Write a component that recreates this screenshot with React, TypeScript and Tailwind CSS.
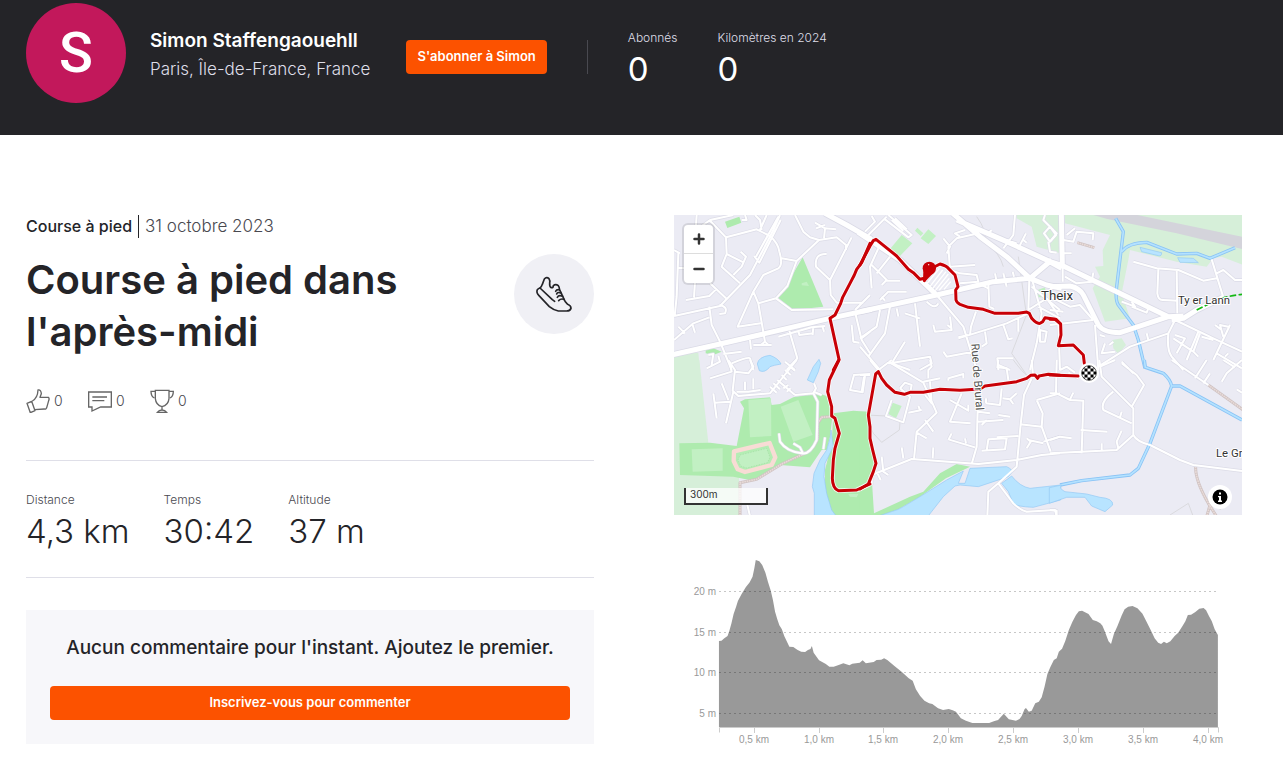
import React from "react";

type Tile = {
  x: number;
  y: number;
  meadow?: string;
  green?: string;
  pale?: string;
  water?: string;
  stream?: string;
  trail?: string;
  minor: string;
  major?: string;
  route: string;
};

const tiles: Tile[] = [
  {
    x: -12,
    y: -15,
    meadow: "M12 430L85 428L90 482H12Z",
    green:
      "M398 142L460 290L370 300L322 262L352 232L370 190ZM165 35L208 20L214 38L172 54ZM107 418L130 415L155 425L130 435L107 430Z",
    pale: "M395 220L410 215L417 228L395 226Z",
    water: "M262 462Q265 440 300 436Q325 445 333 462Q310 466 300 470Q285 490 268 482ZM412 510L430 470L447 448L452 460L445 485L430 518Z",
    minor:
      "M12 318L150 288L240 195L310 60L330 15M258 140L325 20M252 138L268 158L332 30M80 15L78 45M118 30L168 82L260 58L300 78Q325 100 328 125Q340 165 325 175L280 195L250 245L203 350L272 340M168 82L170 132L155 170L210 220M170 132L222 158M190 195L215 170L228 140L212 125M120 30L190 15M255 15L270 30L275 60M290 15L270 60M335 145L380 153M447 90L380 153L352 228L318 265L265 280M318 265L365 300L490 298M250 245L265 280L285 395M375 15L400 65L420 82L447 90L500 82L528 105L528 120M545 82L480 210L438 170Q432 130 470 132M480 210L482 255L500 278H580M435 38L465 55L498 58M438 55L465 45M465 55L462 85M118 290L125 345L150 395L185 480M12 390L70 340L118 322M25 350L45 370M68 345L75 368M120 220L168 265M138 238L118 258L48 270M75 215L72 262M148 285Q175 290 165 310L148 312M12 120L30 130M25 130L20 260L14 318M45 85L120 30M25 173L45 175M215 30L230 30L225 15M160 432L215 425M185 460Q235 440 240 445L250 480M115 435L130 432L125 465M240 390L243 418M250 405H305M272 405L285 395L295 405M325 380L425 352L465 348M385 362L388 375L430 370M430 350L428 375M458 350L462 365M358 362L382 445L350 480M345 455L375 480M555 305L575 390L600 430M555 300L600 255M575 385L600 365M545 345L550 395L568 398",
    major: "M0 436L150 402L310 365L480 325L605 298M465 10L530 45L605 88",
    route: "M490 480L507 448L480 325L495 315L512 280L518 262L540 220L553 195L560 178L575 158L600 100",
  },
  {
    x: 558,
    y: -15,
    meadow: "M470 15H602V130L530 110L515 50L470 25ZM533 100H600V122Z",
    green: "",
    pale: "M125 75L157 100L118 140L92 115ZM205 58L228 78L205 102L182 85ZM172 53L190 70L182 78L165 62ZM533 240L555 232L560 262L535 262Z",
    minor:
      "M85 15L155 75L145 82L75 28M95 30L130 62M105 25L140 58M80 20L25 75M15 65L45 35L35 18M55 115L30 170L35 235M35 165L80 210L65 225M90 140L50 190M75 212L120 212M60 270L85 245L140 245M65 260L75 272M355 70L290 85L265 110L270 180L300 190L350 195L355 215L300 220M250 85L270 110L260 130M270 170L345 165M315 60L285 70L300 80M465 15L460 75L430 115M498 70L475 115M490 90L500 98M440 90L470 100M385 220L388 290L402 297M355 220L385 235M430 190L440 230M405 190L410 215M458 185L462 200M200 275Q225 300 235 280M230 255L310 350L350 480M508 205L505 300L560 265M515 205L545 310L530 400L510 480M515 230L600 300M560 265L595 315M535 290L600 325M295 385L440 340L505 310M295 382L325 375M348 305L333 350L330 375M375 365L380 400L365 410M430 345L445 388L458 385M475 325V365M270 320L275 360L225 365L220 345M262 345L275 355M250 425L260 440L340 425M110 295L115 320M165 280L180 410M135 310L180 325M60 300L50 350L0 385M90 290L75 370L25 440M0 410L60 480M135 395L95 460L150 480M90 460L210 440L215 460L180 480M415 480L412 445L460 445M415 465L450 480M540 360L560 365L555 395L540 395ZM552 70L570 50L590 70L570 95ZM555 15L550 30L580 60M565 95L570 125L590 128M395 60L380 75",
    major: "M-5 67L120 150L230 255M0 305L230 255L400 215L510 205L575 150M278 10L360 80L440 140L510 205L560 225L605 235M290 30L440 95L560 150L605 175",
    route:
      "M0 165L30 108L40 92L48 88L110 138L145 178L160 188L180 208L193 205M193 212L205 180L240 162Q260 168 265 175L285 195L294 230L287 240L288 270Q290 278 300 283L325 292L370 298L405 310H475L500 306L508 310L515 325Q530 342 540 340L548 335L555 323L585 328L600 340",
  },
  {
    x: 1128,
    y: -15,
    meadow:
      "M0 15H18V60L0 80ZM45 15H580V165L515 140L490 145L470 170L380 155L240 120L235 150L215 250L240 325L165 335L128 235L150 200L135 170L160 168L158 120L180 75L45 40ZM187 390L215 385L228 405L205 432L190 415Z",
    water: "M270 112L335 128Q335 140 325 137L275 125ZM383 143L430 145L445 158L390 157Z",
    stream: "M197 25L220 65L200 230Q195 270 205 285L250 345L265 390L285 475M215 125Q235 98 290 97L380 132L440 130L480 145L555 113",
    trail: "M82 98L133 113",
    minor:
      "M250 155L320 175L385 180L460 212L500 205M325 178L322 250Q325 272 340 270L382 272M380 180L382 310M485 148L520 262M500 190L520 180L555 210H576M0 260L60 290L90 285L130 330M135 345L145 480M0 345L130 330M25 340L30 480M145 470L240 410L355 370L375 330M375 330L490 385L576 425M355 370Q350 420 365 440L400 480M370 385L430 425M375 375L405 385L380 430M445 365L410 450M450 370L430 425L445 440M455 380L490 390M495 345L515 360M540 345L490 450M535 350L510 345L520 380M500 430L576 475M525 440L535 430M290 370L295 390M165 400L155 430L195 425M178 405L190 395M38 165V215M130 188L125 215L80 220L45 200M40 90L70 95L80 65L130 70L128 90M50 75L75 55M38 130H65M215 275L255 290L245 275M245 290L290 308L295 295M215 455L235 475M150 375L165 380M0 300L40 305M0 50L18 75L0 95",
    major: "M0 155L40 168L200 245L355 320L400 318M34 10L37 165M0 230L60 228Q90 235 100 255L145 345Q160 368 210 368L355 320M365 330L400 325L440 300L520 262",
    route: "M0 328H18L32 342L33 375L25 407L70 405L100 435L103 460",
  },
  {
    x: -12,
    y: 435,
    meadow: "M12 0H88L115 248L200 262L207 350L210 470H12Z",
    green:
      "M210 125L225 118L300 112L305 135L330 132L370 112L440 98L470 108L487 170L480 230L470 270H455L420 322L330 315L250 362L190 350L30 345L28 250L120 248L200 258L222 145ZM490 160L550 152L602 156V470H485L465 400V330L485 250Z",
    pale: "M235 120L303 115L304 228L240 232ZM332 140L385 120L428 225L370 245ZM65 268L158 265V332L68 335ZM535 402L565 402L560 412L540 410Z",
    water: "M483 210L490 260L465 310L462 350L470 400L485 450L500 470H433V400L427 380L432 340L450 300L470 270L480 235Z",
    trail: "M480 170L455 172L443 190V235Q435 260 415 275L335 312L260 358L210 368V470",
    minor:
      "M175 0L195 30L188 92L205 108L300 100L380 0M190 95L168 190M130 100L140 175M135 128L180 125M155 70L175 120M200 95L235 95L272 90M225 65V90M250 55V88M120 55L185 35L180 10M110 25L150 5L145 -12M195 35L235 40L250 20L240 0M300 80L320 98M310 70L330 88M322 60L375 105M335 45L350 60M345 30L362 45M357 18L375 32M340 85L355 75M350 95L362 85M375 105L430 100L443 125L440 240Q420 285 395 280Q350 275 330 245L327 220M398 278L390 262L370 250M430 100L438 85L432 70M455 105L430 95M465 232L460 268M550 45L600 42M552 45L540 90L578 97L585 48M232 435L240 468",
    route: "M600 372L560 390L505 392Q488 385 487 355L490 300L495 265L508 220L495 175L485 168V140L473 95L478 60L507 0",
  },
  {
    x: 558,
    y: 435,
    green: "M-2 155L18 155L30 250L48 320L35 350L42 460L150 410L190 395L240 340L290 312L330 320L258 355L180 410L115 448L55 470H-2Z",
    pale: "M98 128L125 138L108 175L85 162Z",
    water:
      "M50 470L115 448L130 440L180 410L260 360L310 333L295 370L315 370L330 325L440 320Q458 328 455 337L445 350L355 380L300 375L285 378L250 410L203 470ZM455 348Q480 380 510 385L602 375V420L520 442Q470 440 460 430L445 395L425 370Z",
    minor:
      "M30 0L55 30L95 0M0 45L30 45M5 95L12 50M85 5L190 68L230 158L170 215L162 297M190 65L240 55M210 0L215 20L205 30V55M35 375V345L155 297L355 312L470 300L545 285L600 280M65 290L70 335L85 345M50 335L62 360M335 312L350 260L353 150M95 120L78 168L130 187L150 110L120 85M120 85L135 68L155 75L150 100M145 158L185 150M175 138L180 150M195 180L220 215M195 105L215 130L210 65M170 218L200 235M125 262L130 295M220 262L218 295M305 100L270 185L332 190M270 120L325 152V135M355 185L430 180M355 155L390 160M380 180L365 195M265 240L275 220M265 238L345 262M315 235L318 250M365 272L435 268L440 235L385 238L380 272M410 232L475 228M378 130L420 135L425 85M378 130V115M428 115L450 118L460 132M450 118L470 100M515 55L492 105L482 193L470 320L415 370L385 395L382 470M415 370L460 430Q480 450 500 455L585 450L590 470M530 120L600 100M530 120L548 160L545 200L480 193M545 200L572 275M505 240L550 250M500 265L512 245L500 235M550 245L600 230M265 55L310 42V55M265 55V62M415 0L412 22L440 25L445 60M515 0L520 55M415 165L450 170",
    route:
      "M600 46L565 43L537 48L533 55L525 45L512 46L500 55L470 65L375 78L360 87L300 91L240 88L190 97L150 97L133 103L105 97L80 75L65 55L55 35L47 42L25 165L30 200V235L38 270L48 310L40 335L25 372L0 387",
  },
  {
    x: 1128,
    y: 435,
    meadow: "",
    water: "M-2 383L35 375Q25 385 45 395L110 402L150 412Q190 415 188 435L165 455L125 438L105 412L50 412L-2 430Z",
    stream: "M283 0L286 22L340 40Q362 60 365 78L300 250L265 325L240 345L95 362L30 375M365 78H390L576 180",
    trail: "M475 75L580 150M437 320Q435 360 475 430L500 470M480 435L470 470",
    minor:
      "M0 100L20 100L60 120L100 122L95 280M0 280L200 270L250 225V145L155 50L148 0M190 95Q150 125 160 150L245 190M245 140L282 75L260 45L215 10M235 25L250 40M92 210L172 215M250 225Q260 245 300 255L390 300L430 315L576 333M205 265L200 245L215 212M155 250V270M60 118L70 98M20 0L18 100M0 240L30 230L65 235M210 172L215 155M30 30L50 20L75 38M55 38L85 55M150 20L195 0M365 0L475 75M435 55L470 0M460 70L480 40M515 65L530 40L576 0M555 22L520 0M560 88L576 98M0 450L20 452V465",
    route: "M85 48L0 45",
  },
];

function Layer({ field, children }: { field: keyof Tile; children: (d: string) => React.ReactNode }) {
  return (
    <>
      {tiles.map((t, i) => (
        <g key={i} transform={`translate(${t.x} ${t.y})`}>
          {t[field] ? children(String(t[field])) : null}
        </g>
      ))}
    </>
  );
}

function MapDrawing() {
  return (
    <svg
      viewBox="0 0 1704 900"
      className="block w-full"
      fill="none"
      strokeLinejoin="round"
      role="img"
      aria-label="Carte du parcours"
    >
      <rect width="1704" height="900" fill="#ebebf4" />
      <Layer field="meadow">{(d) => <path d={d} fill="#d6efd9" />}</Layer>
      <path d="M1258 0H1390L1704 65V102L1508 55L1300 12Z" fill="#d4d4db" />
      <Layer field="green">{(d) => <path d={d} fill="#aeebae" />}</Layer>
      <Layer field="pale">{(d) => <path d={d} fill="#c2f0c3" />}</Layer>
      <g transform="translate(-12 435)">
        <path d="M192 274L299 249L316 292L305 315L225 336L203 328L191 303Z" fill="#b4edb4" stroke="#f8dcd5" strokeWidth="13" />
        <path d="M210 285L290 265L300 292L292 308L230 324L212 318L204 300Z" fill="#c2f0c3" stroke="#a0dca2" strokeWidth="2" strokeDasharray="4 4" />
      </g>
      <g transform="translate(558 435)" stroke="#dadade" strokeWidth="3">
        <path d="M18 165L80 168M120 187L118 210L65 247L40 220L30 200M460 0Q490 40 500 45M350 10" />
        <path d="M350 -430Q380 -390 378 -350Q420 -320 430 -280M475 -310L500 -130M505 -150L455 -20L500 45M1080 450L1100 400" />
        <path d="M930 465L985 430L998 465" />
      </g>
      <Layer field="trail">
        {(d) => (
          <>
            <path d={d} stroke="#cfc2c2" strokeWidth="9" />
            <path d={d} stroke="#e8dbd8" strokeWidth="5" strokeDasharray="5 2" />
          </>
        )}
      </Layer>
      <Layer field="minor">{(d) => <path d={d} stroke="#dcdce7" strokeWidth="10" />}</Layer>
      <Layer field="major">{(d) => <path d={d} stroke="#dadae6" strokeWidth="20" />}</Layer>
      <Layer field="stream">
        {(d) => (
          <>
            <path d={d} stroke="#8ac3f5" strokeWidth="10" />
            <path d={d} stroke="#b4e2ff" strokeWidth="5" />
          </>
        )}
      </Layer>
      <Layer field="water">{(d) => <path d={d} fill="#b8e4ff" stroke="#94c8f4" strokeWidth="2" />}</Layer>
      <Layer field="minor">{(d) => <path d={d} stroke="#fff" strokeWidth="6" />}</Layer>
      <Layer field="major">{(d) => <path d={d} stroke="#fff" strokeWidth="15" />}</Layer>
      <g transform="translate(558 -15)" stroke="#fff" strokeWidth="4">
        <path d="M200 222L238 175M208 232L248 180M216 238L258 185M226 242L265 192M238 240L268 205M252 238L272 215" />
      </g>
      <path d="M1568 285L1625 256Q1660 243 1704 238" stroke="#14b814" strokeWidth="5" strokeDasharray="20 7" />
      <Layer field="route">{(d) => <path d={d} stroke="#fff" strokeOpacity=".8" strokeWidth="14" strokeLinecap="round" />}</Layer>
      <Layer field="route">{(d) => <path d={d} stroke="#c80006" strokeWidth="9" strokeLinecap="round" />}</Layer>
      <g fill="#c80006">
        <circle cx="766" cy="160" r="20" />
        <path d="M748 168L747 198H755L780 172Z" />
        <circle cx="764" cy="149" r="2" fill="#fff" />
      </g>
      <circle cx="1245" cy="474" r="30" fill="#fff" />
      <circle cx="1245" cy="474" r="22" stroke="#000" strokeWidth="2" />
      <clipPath id="finish">
        <circle cx="1245" cy="474" r="22" />
      </clipPath>
      <g clipPath="url(#finish)" stroke="#000" strokeWidth="9" strokeDasharray="9 9">
        <path d="M1222.500 456H1268M1231.500 465H1268M1222.500 474H1268M1231.500 483H1268M1222.500 492H1268" />
      </g>
      <g
        fill="#333"
        stroke="#fff"
        strokeWidth="6"
        paintOrder="stroke"
        className="font-[Roboto,sans-serif]"
      >
        <text x="1101" y="256" fontSize="40">Theix</text>
        <text x="1512" y="267" fontSize="34">Ty er Lann</text>
        <text x="1626" y="726" fontSize="34">Le Gra</text>
        <text transform="translate(892 386) rotate(86)" fontSize="34" fill="#555">Rue de Brural</text>
      </g>
    </svg>
  );
}

function ActivityMap() {
  return (
    <div className="relative overflow-hidden font-[Inter,sans-serif]">
      <MapDrawing />
      <div className="absolute top-[10px] left-[10px] flex w-[29px] flex-col rounded bg-white shadow-[0_0_0_2px_rgba(0,0,0,0.1)]">
        <button aria-label="Zoomer" className="flex h-[29px] items-center justify-center border-b border-[#ddd]">
          <svg className="size-3" viewBox="0 0 12 12" stroke="#333" strokeWidth="2.500" strokeLinecap="round">
            <path d="M1.500 6h9M6 1.500v9" />
          </svg>
        </button>
        <button aria-label="Dézoomer" className="flex h-[29px] items-center justify-center">
          <svg className="size-3" viewBox="0 0 12 12" stroke="#333" strokeWidth="2.500" strokeLinecap="round">
            <path d="M1.500 6h9" />
          </svg>
        </button>
      </div>
      <div className="absolute bottom-[10px] left-[10px] h-[17px] w-[84px] border-2 border-t-0 border-[#333] bg-white/75 px-1 text-[10px] leading-[13px] text-[#333]">
        300m
      </div>
      <button
        aria-label="Informations sur la carte"
        className="absolute right-[10px] bottom-[6px] flex size-6 items-center justify-center rounded-full bg-white"
      >
        <svg className="size-4" viewBox="0 0 16 16">
          <circle cx="8" cy="8" r="7.500" />
          <path d="M6 7h3v4.500h1V13H6v-1.500h1V8.200H6zM7 3.500h2v2H7z" fill="#fff" />
        </svg>
      </button>
    </div>
  );
}

const elevationTicks = [
  { label: "20 m", y: 51 },
  { label: "15 m", y: 92 },
  { label: "10 m", y: 132 },
  { label: "5 m", y: 173 },
];

const distanceTicks = [
  { label: "0,5 km", x: 80 },
  { label: "1,0 km", x: 145 },
  { label: "1,5 km", x: 209 },
  { label: "2,0 km", x: 274 },
  { label: "2,5 km", x: 339 },
  { label: "3,0 km", x: 404 },
  { label: "3,5 km", x: 469 },
  { label: "4,0 km", x: 534 },
];

function ElevationChart() {
  return (
    <svg
      viewBox="0 0 568 210"
      className="block w-full font-[Liberation_Sans,Arial,sans-serif]"
      role="img"
      aria-label="Profil d'altitude"
    >
      <path
        transform="translate(6 0) scale(.3574 .33333)"
        fill="#999"
        d="M109 303L116 302L124 295L133 288L138 273L144 250L150 222L157 200L162 183L172 163L184 142L195 127L203 110L208 85L212 60L222 64L230 75L239 98L246 125L254 152L260 180L266 215L272 237L278 256L285 268L292 289L306 320L317 321L328 329L339 335L350 336L358 330L365 327L369 318L374 338L389 361L408 372L418 380L430 380L444 375L457 370L474 376L482 371L503 368L511 361L520 370L542 366L550 360L563 359L571 355L580 360L600 378L620 395L640 415L651 422L660 448L672 468L684 482L697 490L706 492L722 505L736 510L752 507L763 511L772 515L786 535L800 542L818 549H865L880 543L890 540L906 521L920 538L940 542L950 537L956 528L964 508L968 504L976 515L984 512L994 490L1004 485L1012 472L1020 440L1028 402L1036 382L1046 360L1054 355L1060 335L1069 326L1078 303L1088 270L1098 245L1108 225L1116 214L1125 212L1143 222L1155 240L1166 244L1176 250L1182 257L1189 275L1199 304L1206 312L1214 282L1224 258L1236 226L1244 208L1254 200L1266 198L1280 205L1294 221L1304 242L1317 270L1328 295L1338 308L1346 312L1354 305L1362 310L1372 304L1384 288L1394 278L1406 258L1414 244L1421 225L1430 224L1442 216L1453 206L1465 204L1472 211L1480 228L1488 244L1496 268L1505 285V561H109Z"
      />
      <g stroke="#000" strokeOpacity=".22" strokeDasharray="2 3">
        {elevationTicks.map((t) => (
          <path key={t.label} d={`M45 ${t.y}.500H544`} />
        ))}
      </g>
      <g fill="#999" fontSize="10" textAnchor="end">
        {elevationTicks.map((t) => (
          <text key={t.label} x="42" y={t.y + 4}>
            {t.label}
          </text>
        ))}
      </g>
      <path d="M45.500 192.500V187.500H544.500V192.500" fill="none" stroke="#ccc" />
      <g stroke="#ccc">
        {distanceTicks.map((t) => (
          <path key={t.label} d={`M${t.x}.500 187V193`} />
        ))}
      </g>
      <g fill="#999" fontSize="10" textAnchor="middle">
        {distanceTicks.map((t) => (
          <text key={t.label} x={t.x} y="203">
            {t.label}
          </text>
        ))}
      </g>
    </svg>
  );
}

function Stat({ label, value, dark = false }: { label: string; value: string; dark?: boolean }) {
  return (
    <div className="flex flex-col">
      <dt className={dark ? "text-[12px] leading-4 font-light text-[#dfdfe8]" : "text-[12px] leading-4 font-light text-[#494950]"}>{label}</dt>
      <dd className={dark ? "text-[33px] leading-[46px] text-white" : "text-[33px] leading-[46px] font-light text-[#242428]"}>{value}</dd>
    </div>
  );
}

const iconClass = "size-6 fill-none stroke-[#666] stroke-[4]";

function Reaction({ label, children }: { label: string; children: React.ReactNode }) {
  return (
    <li className="flex items-center gap-1" aria-label={label}>
      {children}
      <span className="w-2 text-sm font-light text-[#494950]">0</span>
    </li>
  );
}

export default function App() {
  return (
    <div className="min-h-screen bg-white font-[Inter,sans-serif] text-[#242428]">
      <header className="flex items-start gap-9 bg-[#242428] pt-[3px] pr-[41px] pb-8 pl-[26px]">
        <div className="flex items-center gap-6">
          <div className="flex size-[100px] items-center justify-center rounded-full bg-[#c2185b] font-[Roboto,sans-serif] text-[56px] font-medium text-white">
            S
          </div>
          <div className="pt-1">
            <h2 className="text-[19px] leading-7 font-semibold text-white">Simon Staffengaouehll</h2>
            <p className="text-[17px] leading-7 font-light text-[#dfdfe8]">Paris, Île-de-France, France</p>
          </div>
        </div>
        <div className="flex items-center gap-10 pt-[19px]">
          <button className="h-[34px] rounded bg-[#fc5200] px-[11px] text-[13px] font-semibold text-white">S'abonner à Simon</button>
          <div className="h-[34px] w-px bg-[#494950]" />
          <dl className="flex gap-10 pt-2">
            <Stat dark label="Abonnés" value="0" />
            <Stat dark label="Kilomètres en 2024" value="0" />
          </dl>
        </div>
      </header>

      <main className="grid grid-cols-2 gap-20 pt-20 pr-[41px] pb-6 pl-[26px]">
        <section>
          <div className="flex h-[23px] items-center leading-[23px]">
            <span className="border-r border-[#242428] pr-[6px] text-base leading-[23px] font-medium">Course à pied</span>
            <time className="pl-[6px] text-[17px] font-light text-[#494950]">31 octobre 2023</time>
          </div>
          <div className="mt-4 flex items-start justify-between">
            <h1 className="w-[420px] text-[40px] leading-[52px] font-semibold">Course à pied dans l'après-midi</h1>
            <div className="flex size-20 shrink-0 items-center justify-center rounded-full bg-[#f0f0f5]">
              <svg
                className="size-10"
                viewBox="132 105 120 120"
                fill="none"
                stroke="#242428"
                strokeWidth="5"
                strokeLinecap="round"
                strokeLinejoin="round"
              >
                <path d="M163 120Q170 112 177 119Q181 125 179 132Q178 143 184 146Q190 146 190 140Q197 134 205 140Q209 145 209 153Q213 160 219 174Q224 188 233 196Q243 200 243 208Q240 216 230 216H205Q190 213 178 203L147 170Q138 161 142 152Q145 148 150 147Q154 145 157 136Z" />
                <path d="M150 147L187 182L194 187M197 157Q199 151 208 152M200 165Q202 158 212 162M202 175Q206 167 218 172M206 185Q212 178 222 181" />
              </svg>
            </div>
          </div>
          <ul className="mt-[30px] flex h-[26px] items-center gap-[26px]">
            <Reaction label="Kudos">
              <svg className={iconClass} viewBox="79 569 72 72" strokeLinejoin="round">
                <path d="M82 612L96 606L106 634L92 640ZM98 605Q114 596 115 572Q124 570 125 583L121 594L146 594Q150 598 147 604L142 622Q140 631 134 629L105 631" />
              </svg>
            </Reaction>
            <Reaction label="Commentaires">
              <svg className={iconClass} viewBox="264 569 72 72">
                <path d="M266 578H334V623H302L276 635V623H266ZM277 593H321M277 604H313" />
              </svg>
            </Reaction>
            <Reaction label="Réussites">
              <svg className={iconClass} viewBox="453 569 72 72">
                <path d="M469 573H510V598Q508 618 489 622Q471 618 469 598ZM469 576H456Q456 592 466 596M510 576H523Q523 592 513 596M489 622V633M475 639Q480 632 489 632Q498 632 503 639Z" />
              </svg>
            </Reaction>
          </ul>
          <dl className="mt-[46px] flex gap-[34px] border-y border-[#dfdfe8] pt-[31px] pb-[23px]">
            <Stat label="Distance" value="4,3 km" />
            <Stat label="Temps" value="30:42" />
            <Stat label="Altitude" value="37 m" />
          </dl>
          <div className="mt-8 bg-[#f7f7fa] p-6 text-center">
            <p className="text-[19px] leading-[28px] font-medium">Aucun commentaire pour l'instant. Ajoutez le premier.</p>
            <button className="mt-6 h-[34px] w-full rounded bg-[#fc5200] text-[13px] font-semibold text-white">
              Inscrivez-vous pour commenter
            </button>
          </div>
        </section>
        <section className="flex flex-col gap-[25px]">
          <ActivityMap />
          <ElevationChart />
        </section>
      </main>
    </div>
  );
}
